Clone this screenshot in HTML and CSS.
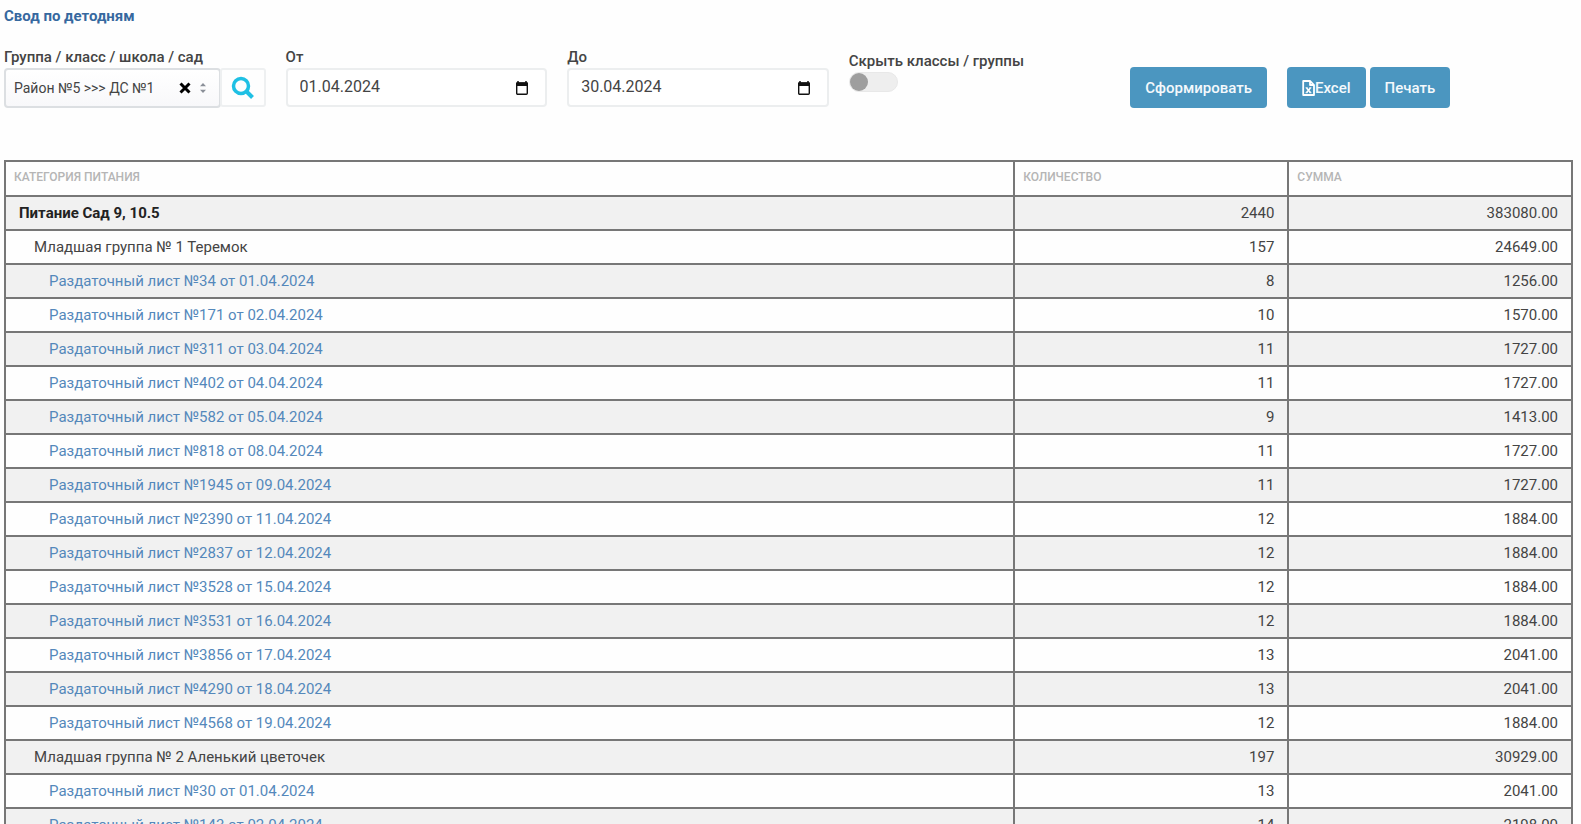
FILE: index.html
```html
<!DOCTYPE html>
<html lang="ru">
<head>
<meta charset="utf-8">
<title>Свод по детодням</title>
<link rel="stylesheet" href="styles.css">
</head>
<body>
<main class="page">
  <h1 class="title">Свод по детодням</h1>
  <form class="filters">
    <div class="field">
      <label class="label" for="group">Группа / класс / школа / сад</label>
      <div class="group-row">
        <div class="picker">
          <select class="picker-select" id="group"><option>Район №5 &gt;&gt;&gt; ДС №1</option></select>
          <button class="clear" type="button" aria-label="Очистить"><svg width="12" height="12" viewBox="0 0 12 12"><path d="M1.500 1.500l9 9M10.500 1.500l-9 9" stroke="#000" stroke-width="3"/></svg></button>
          <svg class="arrows" width="8" height="12" viewBox="0 0 8 12"><path d="M1 4.200L4 1l3 3.200zM1 7.800L4 11l3-3.200z" fill="#8a8f98"/></svg>
        </div>
        <button class="search" type="button" aria-label="Найти"><svg width="24" height="24" viewBox="0 0 24 24"><circle cx="10" cy="10" r="7.500" fill="none" stroke="#1fc0e4" stroke-width="3.500"/><path d="M15.500 15.500l6 6" stroke="#1fc0e4" stroke-width="4"/></svg></button>
      </div>
    </div>
    <div class="field">
      <label class="label" for="from">От</label>
      <div class="date">
        <input class="date-input" id="from" type="text" value="01.04.2024">
        <button class="calendar" type="button" aria-label="Календарь"><svg width="14" height="14" viewBox="0 0 14 14"><path d="M3 0v3M11 0v3" stroke="#111" stroke-width="1.500"/><rect x="1.700" y="2" width="10.600" height="11.200" rx="1" fill="none" stroke="#111" stroke-width="1.400"/><path d="M1 1.500h12V5H1z" fill="#111"/></svg></button>
      </div>
    </div>
    <div class="field">
      <label class="label" for="to">До</label>
      <div class="date">
        <input class="date-input" id="to" type="text" value="30.04.2024">
        <button class="calendar" type="button" aria-label="Календарь"><svg width="14" height="14" viewBox="0 0 14 14"><path d="M3 0v3M11 0v3" stroke="#111" stroke-width="1.500"/><rect x="1.700" y="2" width="10.600" height="11.200" rx="1" fill="none" stroke="#111" stroke-width="1.400"/><path d="M1 1.500h12V5H1z" fill="#111"/></svg></button>
      </div>
    </div>
    <div class="field switch-field">
      <label class="label" for="hide">Скрыть классы / группы</label>
      <input class="switch" id="hide" type="checkbox">
    </div>
    <div class="actions">
      <button class="btn btn-main" type="submit">Сформировать</button>
      <button class="btn" type="button"><svg width="13" height="16" viewBox="0 0 13 16"><path d="M1.200 1h7l3.800 4v10H1.200zM8 1v4h4" fill="none" stroke="#fff" stroke-width="1.800" stroke-linejoin="round"/><path d="M4.600 8l3.800 4.500M8.400 8l-3.800 4.500" stroke="#fff" stroke-width="1.600"/><path d="M3.600 7.800h2M7.400 7.800h2M3.600 12.700h2M7.400 12.700h2" stroke="#fff" stroke-width="1"/></svg>Excel</button>
      <button class="btn" type="button">Печать</button>
    </div>
  </form>
  <table class="report">
    <colgroup><col class="col-name"><col class="col-count"><col class="col-sum"></colgroup>
    <thead><tr><th>Категория питания</th><th>Количество</th><th>Сумма</th></tr></thead>
    <tbody>
      <tr class="total"><td>Питание Сад 9, 10.5</td><td>2440</td><td>383080.00</td></tr>
      <tr class="group"><td>Младшая группа № 1 Теремок</td><td>157</td><td>24649.00</td></tr>
      <tr><td><a href="#">Раздаточный лист №34 от 01.04.2024</a></td><td>8</td><td>1256.00</td></tr>
      <tr><td><a href="#">Раздаточный лист №171 от 02.04.2024</a></td><td>10</td><td>1570.00</td></tr>
      <tr><td><a href="#">Раздаточный лист №311 от 03.04.2024</a></td><td>11</td><td>1727.00</td></tr>
      <tr><td><a href="#">Раздаточный лист №402 от 04.04.2024</a></td><td>11</td><td>1727.00</td></tr>
      <tr><td><a href="#">Раздаточный лист №582 от 05.04.2024</a></td><td>9</td><td>1413.00</td></tr>
      <tr><td><a href="#">Раздаточный лист №818 от 08.04.2024</a></td><td>11</td><td>1727.00</td></tr>
      <tr><td><a href="#">Раздаточный лист №1945 от 09.04.2024</a></td><td>11</td><td>1727.00</td></tr>
      <tr><td><a href="#">Раздаточный лист №2390 от 11.04.2024</a></td><td>12</td><td>1884.00</td></tr>
      <tr><td><a href="#">Раздаточный лист №2837 от 12.04.2024</a></td><td>12</td><td>1884.00</td></tr>
      <tr><td><a href="#">Раздаточный лист №3528 от 15.04.2024</a></td><td>12</td><td>1884.00</td></tr>
      <tr><td><a href="#">Раздаточный лист №3531 от 16.04.2024</a></td><td>12</td><td>1884.00</td></tr>
      <tr><td><a href="#">Раздаточный лист №3856 от 17.04.2024</a></td><td>13</td><td>2041.00</td></tr>
      <tr><td><a href="#">Раздаточный лист №4290 от 18.04.2024</a></td><td>13</td><td>2041.00</td></tr>
      <tr><td><a href="#">Раздаточный лист №4568 от 19.04.2024</a></td><td>12</td><td>1884.00</td></tr>
      <tr class="group"><td>Младшая группа № 2 Аленький цветочек</td><td>197</td><td>30929.00</td></tr>
      <tr><td><a href="#">Раздаточный лист №30 от 01.04.2024</a></td><td>13</td><td>2041.00</td></tr>
      <tr><td><a href="#">Раздаточный лист №143 от 02.04.2024</a></td><td>14</td><td>2198.00</td></tr>
    </tbody>
  </table>
</main>
</body>
</html>
```
FILE: styles.css
```css
* { box-sizing: border-box; }
body { margin: 0; background: #fefefe; color: #444; font: 15px/20px Roboto, "Noto Sans", sans-serif; }
button, input, select { font: inherit; color: inherit; margin: 0; }
button { padding: 0; border: 0; background: none; }
svg { display: block; flex: none; }
.page { padding: 6px 8px 0 4px; }
.title { margin: 0; color: #36689f; font-size: 15px; line-height: 20px; font-weight: 700; }
.filters { display: grid; grid-template-columns: 13fr 13fr 13fr 13fr 22fr; column-gap: 20px; align-items: start; margin-top: 20px; }
.field { display: flex; flex-direction: column; align-items: stretch; }
.label { height: 22px; line-height: 22px; font-weight: 500; white-space: nowrap; }
.group-row { display: flex; }
.picker { flex: 1; min-width: 0; display: flex; align-items: center; height: 40px; padding: 0 12px 0 8px; border: 2px solid #dcdfe2; border-radius: 4px; background: linear-gradient(#fff, #f8f8fa); margin-right: -1px; }
.picker-select { flex: 1; min-width: 0; appearance: none; border: 0; padding: 0; background: none; font-size: 14px; }
.clear { margin-right: 8px; }
.search { width: 46px; height: 39px; display: flex; align-items: center; justify-content: center; border: 2px solid #eef0f1; border-radius: 3px; }
.date { display: flex; align-items: center; height: 39px; padding: 0 16px 0 12px; border: 2px solid #eceeef; border-radius: 4px; background: #fff; }
.date-input { flex: 1; min-width: 0; border: 0; padding: 0 0 2px; background: none; font-size: 16px; }
.switch-field { align-items: flex-start; padding-top: 4px; }
.switch { appearance: none; width: 49px; height: 20px; border: 1px solid #e8e8e8; border-radius: 10px; background: #eee; display: flex; align-items: center; }
.switch::before { content: ""; width: 18px; height: 18px; border-radius: 50%; background: #9e9e9e; }
.switch:checked { justify-content: flex-end; }
.actions { display: flex; gap: 4px; padding-top: 21px; }
.btn { display: flex; align-items: center; height: 41px; padding: 0 15px; border-radius: 4px; background: #4b96c0; color: #f4f9fc; font-weight: 500; white-space: nowrap; }
.btn-main { margin-right: 16px; }
.report { width: 100%; margin-top: 52px; border-collapse: collapse; table-layout: fixed; }
.col-name { width: 64.400%; }
.col-count { width: 17.500%; }
.report th, .report td { border: 2px solid #777; padding: 6px 13px; height: 34px; text-align: right; }
.report th { height: 35px; padding: 4px 8px 8px; text-align: left; color: #b5b5b5; font-size: 12px; font-weight: 500; text-transform: uppercase; }
.report tbody tr:nth-child(odd) { background: #f1f1f1; }
.report td:first-child { text-align: left; padding-left: 43px; }
.report .total td:first-child { padding-left: 13px; font-weight: 700; color: #222; }
.report .group td:first-child { padding-left: 28px; }
.report a { color: #5488bb; text-decoration: none; }
```
